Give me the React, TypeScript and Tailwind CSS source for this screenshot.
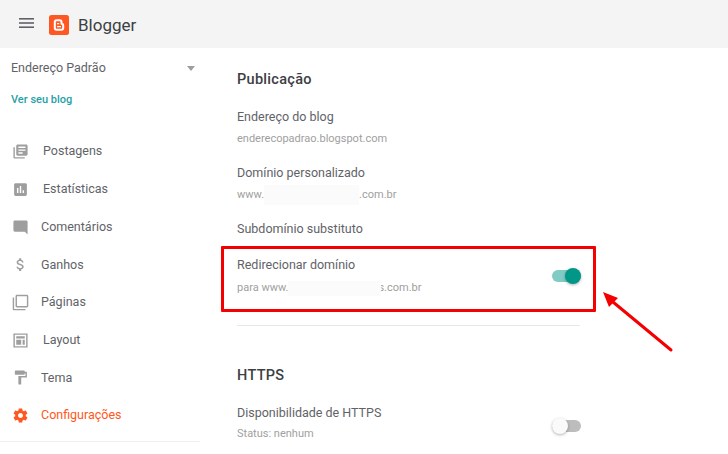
const navItems = [
  { label: 'Postagens', gap: 'w-[43px]', path: 'M4 6H2v14c0 1.1.9 2 2 2h14v-2H4V6zm16-4H8c-1.1 0-2 .9-2 2v12c0 1.1.9 2 2 2h12c1.1 0 2-.9 2-2V4c0-1.1-.9-2-2-2zm-1 9H9V9h10v2zm-4 4H9v-2h6v2zm4-8H9V5h10v2z' },
  { label: 'Estatísticas', gap: 'w-[43px]', path: 'M19 3H5c-1.1 0-2 .9-2 2v14c0 1.1.9 2 2 2h14c1.1 0 2-.9 2-2V5c0-1.1-.9-2-2-2zM9 17H7v-7h2v7zm4 0h-2V7h2v10zm4 0h-2v-4h2v4z' },
  { label: 'Comentários', gap: 'w-[41px]', path: 'M21.99 4c0-1.1-.89-2-1.99-2H4c-1.1 0-2 .9-2 2v12c0 1.1.9 2 2 2h14l4 4-.01-18z' },
  { label: 'Ganhos', gap: 'w-[41px]', path: 'M11.8 10.9c-2.27-.59-3-1.2-3-2.15 0-1.09 1.01-1.85 2.7-1.85 1.78 0 2.44.85 2.5 2.1h2.21c-.07-1.72-1.12-3.3-3.21-3.81V3h-3v2.16c-1.94.42-3.5 1.68-3.5 3.61 0 2.31 1.91 3.46 4.7 4.13 2.5.6 3 1.48 3 2.41 0 .69-.49 1.79-2.7 1.79-2.06 0-2.87-.92-2.98-2.1h-2.2c.12 2.19 1.76 3.42 3.68 3.83V21h3v-2.15c1.95-.37 3.5-1.5 3.5-3.55 0-2.84-2.43-3.81-4.7-4.4z' },
  { label: 'Páginas', gap: 'w-[41px]', path: 'M3 5H1v16c0 1.1.9 2 2 2h16v-2H3V5zm18-4H7c-1.1 0-2 .9-2 2v14c0 1.1.9 2 2 2h14c1.1 0 2-.9 2-2V3c0-1.1-.9-2-2-2zm0 16H7V3h14v14z' },
  { label: 'Layout', gap: 'w-[43px]', path: 'M2 2h20v20H2V2zm2 2v16h16V4H4zm2 2h12v3H6V6zm0 5h7v7H6v-7zm9 0h3v7h-3v-7z' },
  { label: 'Tema', gap: 'w-[41px]', path: 'M18 4V3c0-.55-.45-1-1-1H5c-.55 0-1 .45-1 1v4c0 .55.45 1 1 1h12c.55 0 1-.45 1-1V6h1v4H9v11c0 .55.45 1 1 1h2c.55 0 1-.45 1-1v-9h8V4h-3z' },
  { label: 'Configurações', gap: 'w-[41px]', active: true, path: 'M19.43 12.98c.04-.32.07-.64.07-.98s-.03-.66-.07-.98l2.11-1.65c.19-.15.24-.42.12-.64l-2-3.46c-.12-.22-.39-.3-.61-.22l-2.49 1c-.52-.4-1.08-.73-1.69-.98l-.38-2.65C14.46 2.18 14.25 2 14 2h-4c-.25 0-.46.18-.49.42l-.38 2.65c-.61.25-1.17.59-1.69.98l-2.49-1c-.23-.09-.49 0-.61.22l-2 3.46c-.13.22-.07.49.12.64l2.11 1.65c-.04.32-.07.65-.07.98s.03.66.07.98l-2.11 1.65c-.19.15-.24.42-.12.64l2 3.46c.12.22.39.3.61.22l2.49-1c.52.4 1.08.73 1.69.98l.38 2.65c.03.24.24.42.49.42h4c.25 0 .46-.18.49-.42l.38-2.65c.61-.25 1.17-.59 1.69-.98l2.49 1c.23.09.49 0 .61-.22l2-3.46c.12-.22.07-.49-.12-.64l-2.11-1.65zM12 15.5c-1.93 0-3.5-1.57-3.5-3.5s1.57-3.5 3.5-3.5 3.5 1.57 3.5 3.5-1.57 3.5-3.5 3.5z' },
]

function Toggle({ on }: { on: boolean }) {
  return (
    <div className="relative w-[29px] h-[20px] -mr-[1px] flex items-center">
      <div className={`w-[29px] h-[12px] rounded-full ${on ? 'bg-[#80cbc4]' : 'bg-[#bdbdbd]'}`} />
      <div className={`absolute top-[2px] w-[16px] h-[16px] rounded-full shadow-[0_1px_3px_rgba(0,0,0,0.3)] ${on ? 'right-0 bg-[#009688]' : 'left-0 bg-[#fafafa]'}`} />
    </div>
  )
}

function Mask({ className }: { className: string }) {
  return <span className={`relative inline-block align-middle bg-[#fbfbfb] ${className}`} />
}

export default function App() {
  return (
    <div className="relative w-[728px] h-[454px] overflow-hidden bg-white font-['Roboto',sans-serif]">
      <header className="h-[48px] bg-[#f4f4f4] flex items-center pl-[19px]">
        <svg width="16" height="12" viewBox="0 0 16 12" className="text-[#5f6368] -mt-[2px]" fill="currentColor">
          <rect x="0" y="1" width="15" height="1.6" />
          <rect x="0" y="5.2" width="15" height="1.6" />
          <rect x="0" y="9.4" width="15" height="1.6" />
        </svg>
        <svg width="20" height="20" viewBox="0 0 20 20" className="ml-[14px] mt-[2px]">
          <rect width="20" height="20" rx="2.5" fill="#ff5722" />
          <path d="M7.6 5.2h3.2c1 0 1.7.8 1.7 1.8v1.4c0 .4.4.6.8.6.6 0 .9.4.9.9V13c0 1-.8 1.8-1.8 1.8H7.6c-1 0-1.8-.8-1.8-1.8V7c0-1 .8-1.8 1.8-1.8z" fill="none" stroke="#fff" strokeWidth="2" />
          <path d="M8 8.6h2.2M8 11.6h4" stroke="#fff" strokeWidth="1.3" />
        </svg>
        <span className="ml-[9px] mt-[4px] text-[17px] text-[#3c4043]">Blogger</span>
      </header>

      <div className="flex">
        <aside className="w-[200px] shrink-0">
          <div className="flex items-center justify-between h-[40px] pl-[11px] pr-[5px]">
            <span className="text-[12.5px] text-[#5f6368]">Endereço Padrão</span>
            <span className="w-0 h-0 border-l-[4.5px] border-r-[4.5px] border-t-[5px] border-l-transparent border-r-transparent border-t-[#9e9e9e]" />
          </div>
          <div className="pl-[11px] mt-[5px] text-[11px] leading-[14px] font-medium text-[#26a1a8]">Ver seu blog</div>
          <nav className="mt-[26px] border-b border-[#f0f0f0] pb-[6px]">
            {navItems.map(item => (
              <div key={item.label} className={`flex items-center h-[37.7px] pl-[12px] text-[12.5px] ${item.active ? 'text-[#ff5722]' : 'text-[#5f6368]'}`}>
                <span className={`${item.gap} shrink-0 -ml-[12px] pl-[12px] flex`}>
                  <svg width="17" height="17" viewBox="0 0 24 24" fill="currentColor" className={item.active ? 'text-[#ff5722]' : 'text-[#9e9e9e]'}>
                    <path d={item.path} fillRule={item.label === 'Layout' ? 'evenodd' : undefined} />
                  </svg>
                </span>
                <span>{item.label}</span>
              </div>
            ))}
          </nav>
        </aside>

        <main className="w-[343px] ml-[37px]">
          <h2 className="mt-[23px] text-[14.5px] leading-[18px] font-medium text-[#3c4043] tracking-[0.3px]">Publicação</h2>
          <div className="mt-[19px] text-[12.5px] leading-[18px] text-[#5f6368]">Endereço do blog</div>
          <div className="mt-[6px] text-[11px] leading-[14px] text-[#a0a0a0]">enderecopadrao.blogspot.com</div>
          <div className="mt-[18px] text-[12.5px] leading-[18px] text-[#5f6368]">Domínio personalizado</div>
          <div className="mt-[5px] h-[16px] flex items-center text-[11px] text-[#a0a0a0]">
            www.<Mask className="w-[95px] h-[20px]" />.com.br
          </div>
          <div className="mt-[17px] text-[12.5px] leading-[18px] text-[#5f6368]">Subdomínio substituto</div>

          <div className="mt-[18px] flex items-center justify-between">
            <div>
              <div className="text-[12.5px] leading-[18px] text-[#5f6368]">Redirecionar domínio</div>
              <div className="mt-[6px] h-[16px] flex items-center text-[11px] text-[#a0a0a0]">
                para www.<Mask className="w-[93px] h-[15px]" /><span className="-ml-[3px]">s.com.br</span>
              </div>
            </div>
            <Toggle on />
          </div>

          <div className="mt-[29px] border-t border-[#e8e8e8]" />

          <h2 className="mt-[41px] text-[14.5px] leading-[18px] font-medium text-[#3c4043] tracking-[0.3px]">HTTPS</h2>
          <div className="mt-[19px] flex items-start justify-between">
            <div>
              <div className="text-[12.5px] leading-[18px] text-[#5f6368]">Disponibilidade de HTTPS</div>
              <div className="mt-[5px] text-[11px] leading-[14px] text-[#a0a0a0]">Status: nenhum</div>
            </div>
            <div className="mt-[12px]">
              <Toggle on={false} />
            </div>
          </div>
        </main>
      </div>

      <div className="absolute left-[221px] top-[246px] w-[375px] h-[66px] border-[3px] border-[#f50000] rounded-[1px]" />
      <svg className="absolute left-[596px] top-[285px]" width="80" height="70" viewBox="0 0 80 70">
        <path d="M75 65 L17 17" stroke="#f50000" strokeWidth="3" strokeLinecap="round" />
        <path d="M7 7 L22 13 L13 22 Z" fill="#f50000" />
      </svg>
    </div>
  )
}
